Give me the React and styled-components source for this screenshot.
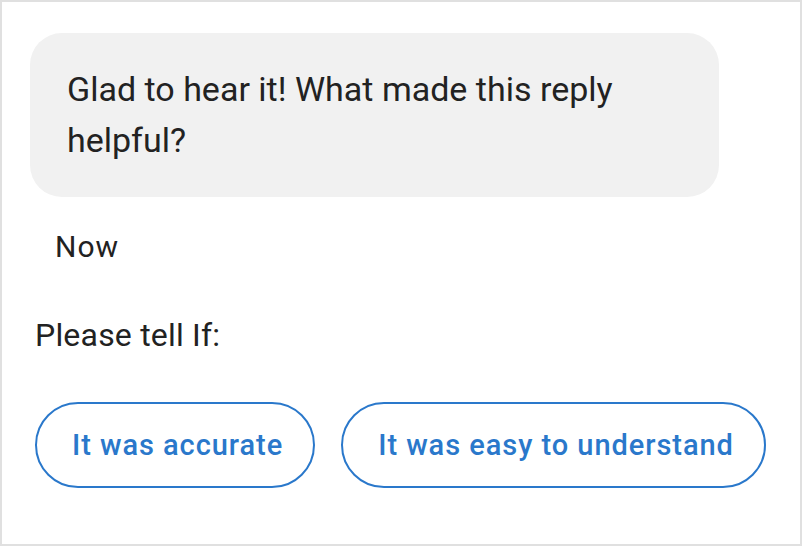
import React from 'react';
import styled, { createGlobalStyle } from 'styled-components';

const GlobalStyle = createGlobalStyle`
  html, body {
    margin: 0;
    padding: 0;
    background: #ffffff;
  }
  body {
    font-family: Roboto, "Liberation Sans", sans-serif;
    color: #222222;
  }
`;

const Frame = styled.div`
  box-sizing: border-box;
  width: 802px;
  height: 546px;
  border: 2px solid #e0e0e0;
  padding: 31px 0 0 28px;
  display: flex;
  flex-direction: column;
  align-items: flex-start;
`;

const Bubble = styled.div`
  box-sizing: border-box;
  width: 689px;
  height: 164px;
  background: #f1f1f1;
  border-radius: 32px;
  padding: 31px 36px 0 37px;
  font-size: 34px;
  line-height: 51px;
  color: #222222;
`;

const Timestamp = styled.div`
  margin: 30px 0 0 25px;
  font-size: 30px;
  line-height: 40px;
  letter-spacing: 1px;
`;

const Prompt = styled.div`
  margin: 48px 0 0 5px;
  font-size: 32px;
  line-height: 40px;
  letter-spacing: 0.2px;
`;

const Choices = styled.div`
  display: flex;
  gap: 26px;
  margin: 47px 0 0 5px;
`;

const Choice = styled.button`
  box-sizing: border-box;
  height: 86px;
  padding: 0 30px 0 35px;
  border: 2px solid #2a78cb;
  border-radius: 43px;
  background: #ffffff;
  color: #2a78cb;
  font-family: Roboto, "Liberation Sans", sans-serif;
  font-size: 29px;
  font-weight: 500;
  letter-spacing: 0.95px;
  cursor: pointer;
`;

const choices = ['It was accurate', 'It was easy to understand'];

export default function App() {
  return (
    <>
      <GlobalStyle />
      <Frame>
        <Bubble>Glad to hear it! What made this reply helpful?</Bubble>
        <Timestamp>Now</Timestamp>
        <Prompt>Please tell If:</Prompt>
        <Choices>
          {choices.map((label) => (
            <Choice key={label}>{label}</Choice>
          ))}
        </Choices>
      </Frame>
    </>
  );
}
